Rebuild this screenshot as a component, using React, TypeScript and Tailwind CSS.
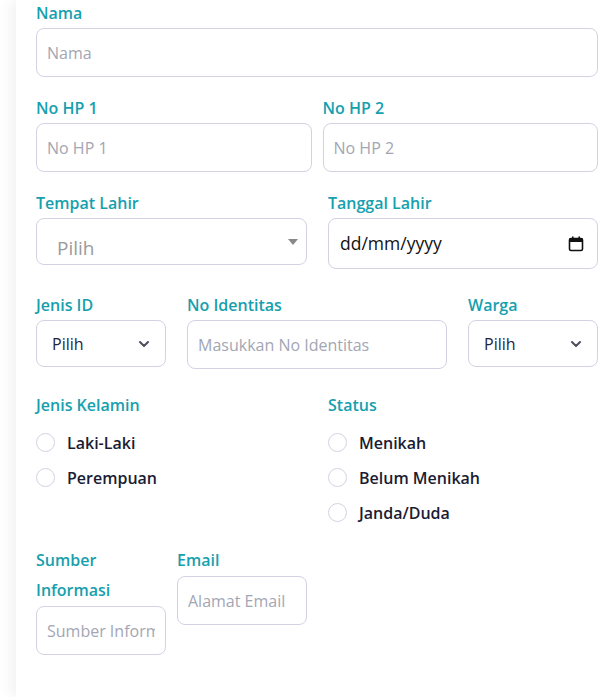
import { ChevronDown } from 'lucide-react'

// Plain form styling shared by the fields
const inputCls =
  'w-full h-[49px] rounded-lg border border-[#d1d3e2] bg-white px-[10px] text-[16px] text-[#1f2340] placeholder:text-[#a3a6b4] outline-none'
const labelCls = 'block text-[16px] leading-[24px] font-semibold text-[#16a0ae]'

function Field({
  label,
  placeholder,
  className = '',
}: {
  label: string
  placeholder: string
  className?: string
}) {
  return (
    <div className={className}>
      <label className={`${labelCls} mb-[3px]`}>{label}</label>
      <input className={inputCls} placeholder={placeholder} />
    </div>
  )
}

function SelectBox({ label, className = '' }: { label: string; className?: string }) {
  return (
    <div className={className}>
      <label className={`${labelCls} mb-[3px]`}>{label}</label>
      <div className="h-[47px] rounded-lg border border-[#d1d3e2] bg-white flex items-center justify-between pl-[15px] pr-[13px]">
        <span className="text-[16px] text-[#1f2340]">Pilih</span>
        <ChevronDown className="w-[16px] h-[16px] text-[#4b4f5c]" strokeWidth={3} />
      </div>
    </div>
  )
}

function Radio({ label }: { label: string }) {
  return (
    <label className="flex items-center h-[35px]">
      <span className="w-[19px] h-[19px] rounded-full border border-[#d1d3e2] bg-white shrink-0" />
      <span className="ml-[12px] text-[16px] font-semibold text-[#1a1c33]">{label}</span>
    </label>
  )
}

export default function App() {
  return (
    <div
      className="min-h-[697px] bg-white"
      style={{ fontFamily: '"Open Sans", "Noto Sans", sans-serif' }}
    >
      <div className="ml-[16px] min-h-[697px] bg-white shadow-[-6px_0_12px_rgba(0,0,0,0.05)] pl-[20px] pr-[8px] pt-[1px]">
        {/* Nama */}
        <Field label="Nama" placeholder="Nama" />

        {/* No HP */}
        <div className="mt-[19px] flex gap-[11px]">
          <Field label="No HP 1" placeholder="No HP 1" className="flex-1" />
          <Field label="No HP 2" placeholder="No HP 2" className="flex-1" />
        </div>

        {/* Tempat / Tanggal lahir */}
        <div className="mt-[19px] flex gap-[21px] items-start">
          <div className="w-[271px]">
            <label className={`${labelCls} mb-[3px]`}>Tempat Lahir</label>
            <div className="h-[47px] rounded-lg border border-[#d1d3e2] bg-white flex items-end justify-between pl-[20px] pr-[8px] pb-[2px]">
              <span className="text-[19px] text-[#9a9a9a]">Pilih</span>
              <span className="mb-[17px] w-0 h-0 border-l-[5px] border-r-[5px] border-t-[6px] border-l-transparent border-r-transparent border-t-[#888]" />
            </div>
          </div>
          <div className="flex-1">
            <label className={`${labelCls} mb-[3px]`}>Tanggal Lahir</label>
            <div className="h-[51px] rounded-lg border border-[#d1d3e2] bg-white flex items-center justify-between pl-[11px] pr-[13px]">
              <span className="text-[17.5px] text-[#111]">dd/mm/yyyy</span>
              <svg width="16" height="16" viewBox="0 0 16 16" fill="none">
                <rect x="1.5" y="2.5" width="13" height="12" rx="1.5" stroke="#111" strokeWidth="1.6" />
                <rect x="1.5" y="2.5" width="13" height="3.5" fill="#111" />
                <rect x="4" y="0.5" width="1.6" height="3" fill="#111" />
                <rect x="10.4" y="0.5" width="1.6" height="3" fill="#111" />
              </svg>
            </div>
          </div>
        </div>

        {/* Identitas */}
        <div className="mt-[24px] flex gap-[21px] items-start">
          <SelectBox label="Jenis ID" className="w-[130px]" />
          <div className="flex-1">
            <label className={`${labelCls} mb-[3px]`}>No Identitas</label>
            <input className={inputCls} placeholder="Masukkan No Identitas" />
          </div>
          <SelectBox label="Warga" className="w-[130px]" />
        </div>

        {/* Jenis kelamin / Status */}
        <div className="mt-[24px] flex gap-[21px]">
          <div className="w-[271px]">
            <div className={`${labelCls} mb-[8px]`}>Jenis Kelamin</div>
            <Radio label="Laki-Laki" />
            <Radio label="Perempuan" />
          </div>
          <div className="flex-1">
            <div className={`${labelCls} mb-[8px]`}>Status</div>
            <Radio label="Menikah" />
            <Radio label="Belum Menikah" />
            <Radio label="Janda/Duda" />
          </div>
        </div>

        {/* Sumber / Email */}
        <div className="mt-[15px] flex gap-[11px] items-start">
          <div className="w-[130px]">
            <label className="block text-[16px] leading-[30px] font-semibold text-[#16a0ae] mb-[1px]">
              Sumber Informasi
            </label>
            <input className={inputCls} placeholder="Sumber Informasi" />
          </div>
          <div className="w-[130px]">
            <label className="block text-[16px] leading-[30px] font-semibold text-[#16a0ae] mb-[1px]">
              Email
            </label>
            <input className={inputCls} placeholder="Alamat Email" />
          </div>
        </div>
      </div>
    </div>
  )
}
